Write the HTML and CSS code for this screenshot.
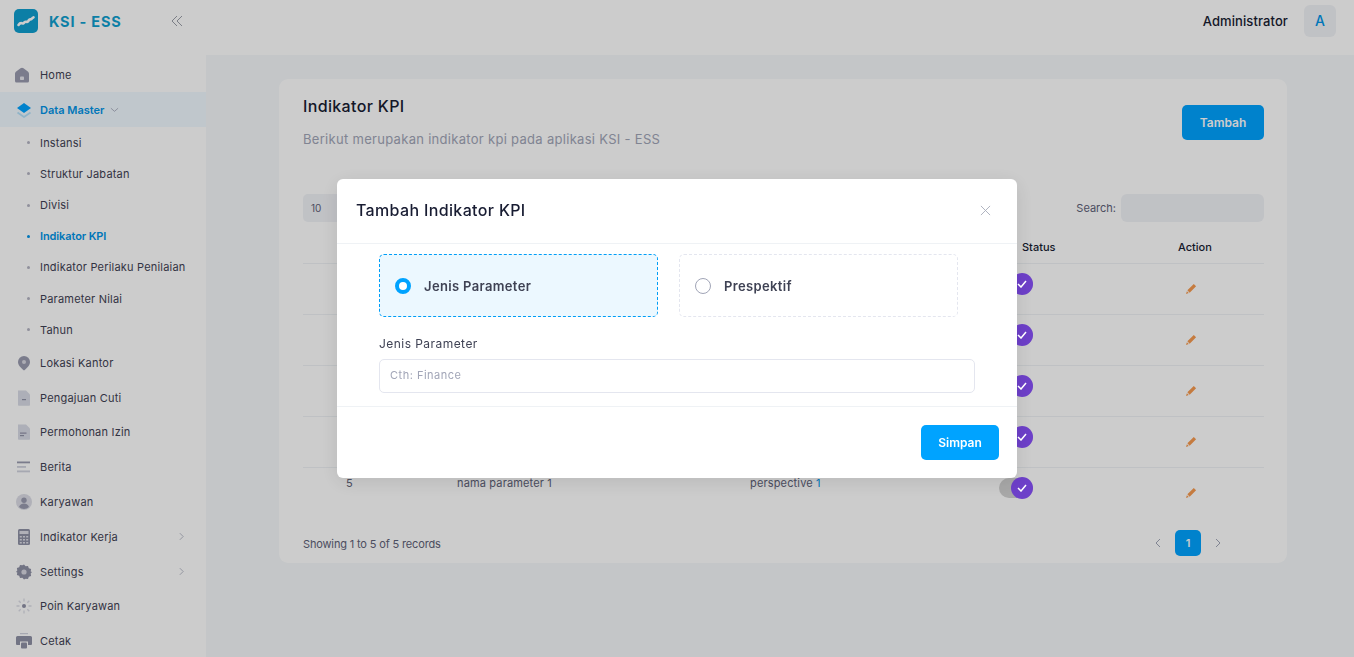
FILE: index.html
```html
<!DOCTYPE html>
<html lang="id">
<head>
<meta charset="utf-8">
<title>Indikator KPI</title>
<link rel="stylesheet" href="styles.css">
</head>
<body>
<div class="app">
  <aside class="sidebar">
    <div class="brand">
      <svg class="logo" viewBox="0 0 24 24"><rect width="24" height="24" rx="5" fill="#0f9fd0"/><path d="M4.500 16c1.500-2.200 3-2 4-1.500s2-2 3.500-1.700 2-.2 2.800-1.500 1.700-.6 2.500-1.200 1.200-1.300 2.200-1.800" fill="none" stroke="#fff" stroke-width="2.600" stroke-linecap="round" stroke-dasharray="4.500 1"/></svg>
      <span class="brand-name">KSI - ESS</span>
      <svg class="collapse" viewBox="0 0 14 14"><path d="M7 2 2 7l5 5M12 2 7 7l5 5" fill="none" stroke="#9a9ea8" stroke-width="1"/></svg>
    </div>
    <nav class="menu">
      <a class="item"><svg class="ic home" viewBox="0 0 16 16"><path d="M1 7c0-1 .3-1.800 1.200-2.500L6.500 1.300a2.500 2.500 0 0 1 3 0l4.300 3.200C14.700 5.200 15 6 15 7v7a1.500 1.500 0 0 1-1.500 1.500h-11A1.500 1.500 0 0 1 1 14z" fill="#9a9cb0"/><rect x="6" y="9.500" width="4" height="3.500" rx=".8" fill="#e8e8ee"/></svg><span>Home</span></a>
      <a class="item active"><svg class="ic" viewBox="0 0 16 16"><path d="M8 1l7 5-7 5-7-5z" fill="#00a3ff"/><path d="M1.500 10.500 8 15l6.500-4.500" fill="none" stroke="#b5e2fb" stroke-width="1.800"/></svg><span>Data Master</span><svg class="chev-down" viewBox="0 0 10 6"><path d="M1 1l4 3.500L9 1" fill="none" stroke="#a1a5b7" stroke-width=".9"/></svg></a>
      <a class="sub"><i class="dot"></i><span>Instansi</span></a>
      <a class="sub"><i class="dot"></i><span>Struktur Jabatan</span></a>
      <a class="sub"><i class="dot"></i><span>Divisi</span></a>
      <a class="sub current"><i class="dot"></i><span>Indikator KPI</span></a>
      <a class="sub"><i class="dot"></i><span>Indikator Perilaku Penilaian</span></a>
      <a class="sub"><i class="dot"></i><span>Parameter Nilai</span></a>
      <a class="sub"><i class="dot"></i><span>Tahun</span></a>
      <a class="item"><svg class="ic" viewBox="0 0 16 16"><path d="M8 1a6 6 0 0 1 6 6c0 3.500-3.500 6.500-6 8.500C5.500 13.500 2 10.500 2 7a6 6 0 0 1 6-6z" fill="#9a9cb0"/><circle cx="8" cy="7" r="2" fill="#d8d8e2"/></svg><span>Lokasi Kantor</span></a>
      <a class="item"><svg class="ic" viewBox="0 0 16 16"><path d="M2 .500h8l4 4V15a.8.8 0 0 1-.8.8H2.800A.8.8 0 0 1 2 15z" fill="#d9dbe6"/><rect x="6" y="9" width="4" height="1.200" fill="#8f91a6"/></svg><span>Pengajuan Cuti</span></a>
      <a class="item"><svg class="ic" viewBox="0 0 16 16"><path d="M2 .500h8l4 4V15a.8.8 0 0 1-.8.8H2.800A.8.8 0 0 1 2 15z" fill="#d9dbe6"/><rect x="4" y="8.500" width="6.500" height="1.200" fill="#8f91a6"/><rect x="4" y="11" width="4" height="1.200" fill="#8f91a6"/></svg><span>Permohonan Izin</span></a>
      <a class="item"><svg class="ic" viewBox="0 0 16 16"><rect x="1" y="2.500" width="13" height="1.800" fill="#9a9cb0"/><rect x="1" y="7" width="9" height="1.800" fill="#d0d2de"/><rect x="1" y="11.500" width="13" height="1.800" fill="#d0d2de"/></svg><span>Berita</span></a>
      <a class="item"><svg class="ic" viewBox="0 0 16 16"><circle cx="8" cy="8" r="8" fill="#dcdde6"/><circle cx="8" cy="6.300" r="2.700" fill="#9a9cb0"/><path d="M3 13c1-3 3-3.600 5-3.600S12 10 13 13a7 7 0 0 1-10 0z" fill="#9a9cb0"/></svg><span>Karyawan</span></a>
      <a class="item arrow"><svg class="ic" viewBox="0 0 16 16"><rect x="2" y="0" width="12" height="16" rx="1.500" fill="#8f91a6"/><rect x="3.500" y="2" width="9" height="3" fill="#dcdde6"/><path d="M3.800 7h2v1.600h-2zM7 7h2v1.600H7zM10.200 7h2v1.600h-2zM3.800 10h2v1.600h-2zM7 10h2v1.600H7zM10.200 10h2v1.600h-2zM3.800 13h2v1.600h-2zM7 13h2v1.600H7zM10.200 13h2v1.600h-2z" fill="#dcdde6"/></svg><span>Indikator Kerja</span><svg class="chev" viewBox="0 0 6 10"><path d="M1 1l4 4-4 4" fill="none" stroke="#a1a5b7" stroke-width=".9"/></svg></a>
      <a class="item arrow"><svg class="ic" viewBox="0 0 16 16"><path d="M8 .5l1.600 1.800 2.400-.4.8 2.300 2.300.8-.4 2.400L16 8l-1.300 1.600.4 2.400-2.300.8-.8 2.300-2.400-.4L8 15.500l-1.600-1.800-2.400.4-.8-2.300-2.300-.8.400-2.400L0 8l1.300-1.600-.4-2.400 2.300-.8.8-2.300 2.400.4z" fill="#8f91a6"/><circle cx="8" cy="8" r="2.600" fill="#d8d8e2"/></svg><span>Settings</span><svg class="chev" viewBox="0 0 6 10"><path d="M1 1l4 4-4 4" fill="none" stroke="#a1a5b7" stroke-width=".9"/></svg></a>
      <a class="item"><svg class="ic" viewBox="0 0 16 16"><circle cx="8" cy="8" r="2" fill="#8f91a6"/><path d="M8 .5v3M8 12.500v3M.5 8h3M12.500 8h3M2.700 2.700l2 2M11.300 11.300l2 2M2.700 13.300l2-2M11.300 4.700l2-2" stroke="#dcdde6" stroke-width="1.300" fill="none"/></svg><span>Poin Karyawan</span></a>
      <a class="item"><svg class="ic" viewBox="0 0 16 16"><rect x="4" y="0" width="8" height="1.200" fill="#d0d2de"/><path d="M1.500 3h13A1.500 1.500 0 0 1 16 4.500V11a1 1 0 0 1-1 1h-3V8.500H4V12H1a1 1 0 0 1-1-1V4.500A1.500 1.500 0 0 1 1.500 3z" fill="#8f91a6"/><rect x="5" y="9.500" width="6" height="6" rx="1" fill="#8f91a6"/></svg><span>Cetak</span></a>
    </nav>
  </aside>
  <div class="main">
    <header class="topbar">
      <span class="user">Administrator</span>
      <span class="avatar">A</span>
    </header>
    <main class="content">
      <section class="card">
        <div class="card-head">
          <div>
            <h1 class="card-title">Indikator KPI</h1>
            <p class="card-desc">Berikut merupakan indikator kpi pada aplikasi KSI - ESS</p>
          </div>
          <button class="btn-add">Tambah</button>
        </div>
        <div class="tools">
          <span class="length">10</span>
          <label class="search">Search:<span class="search-box"></span></label>
        </div>
        <table class="table">
          <thead>
            <tr><th class="c-no"></th><th class="c-name"></th><th class="c-persp"></th><th class="c-status">Status</th><th class="c-action">Action</th></tr>
          </thead>
          <tbody>
            <tr><td class="c-no"></td><td></td><td></td><td><span class="toggle"><svg viewBox="0 0 10 8"><path d="M1 4l3 3 5-6" fill="none" stroke="#fff" stroke-width="1.500"/></svg></span></td><td><svg class="pencil" viewBox="0 0 12 12"><path d="M8.500 1l2.500 2.500L4 10.500 1.500 8zM1 9l2 2-3 1z" fill="#f79a4f"/></svg></td></tr>
            <tr><td class="c-no"></td><td></td><td></td><td><span class="toggle"><svg viewBox="0 0 10 8"><path d="M1 4l3 3 5-6" fill="none" stroke="#fff" stroke-width="1.500"/></svg></span></td><td><svg class="pencil" viewBox="0 0 12 12"><path d="M8.500 1l2.500 2.500L4 10.500 1.500 8zM1 9l2 2-3 1z" fill="#f79a4f"/></svg></td></tr>
            <tr><td class="c-no"></td><td></td><td></td><td><span class="toggle"><svg viewBox="0 0 10 8"><path d="M1 4l3 3 5-6" fill="none" stroke="#fff" stroke-width="1.500"/></svg></span></td><td><svg class="pencil" viewBox="0 0 12 12"><path d="M8.500 1l2.500 2.500L4 10.500 1.500 8zM1 9l2 2-3 1z" fill="#f79a4f"/></svg></td></tr>
            <tr><td class="c-no"></td><td></td><td></td><td><span class="toggle"><svg viewBox="0 0 10 8"><path d="M1 4l3 3 5-6" fill="none" stroke="#fff" stroke-width="1.500"/></svg></span></td><td><svg class="pencil" viewBox="0 0 12 12"><path d="M8.500 1l2.500 2.500L4 10.500 1.500 8zM1 9l2 2-3 1z" fill="#f79a4f"/></svg></td></tr>
            <tr><td class="c-no">5</td><td>nama parameter 1</td><td>perspective <b class="blue">1</b></td><td><span class="toggle"><svg viewBox="0 0 10 8"><path d="M1 4l3 3 5-6" fill="none" stroke="#fff" stroke-width="1.500"/></svg></span></td><td><svg class="pencil" viewBox="0 0 12 12"><path d="M8.500 1l2.500 2.500L4 10.500 1.500 8zM1 9l2 2-3 1z" fill="#f79a4f"/></svg></td></tr>
          </tbody>
        </table>
        <div class="card-foot">
          <span class="records">Showing 1 to 5 of 5 records</span>
          <div class="pager">
            <svg class="pg" viewBox="0 0 6 10"><path d="M5 1 1 5l4 4" fill="none" stroke="#a1a5b7" stroke-width="1"/></svg>
            <span class="pg-num">1</span>
            <svg class="pg" viewBox="0 0 6 10"><path d="M1 1l4 4-4 4" fill="none" stroke="#a1a5b7" stroke-width="1"/></svg>
          </div>
        </div>
      </section>
    </main>
  </div>
</div>
<div class="overlay">
  <div class="modal">
    <div class="modal-head">
      <h2 class="modal-title">Tambah Indikator KPI</h2>
      <svg class="close" viewBox="0 0 12 12"><path d="M1 1l10 10M11 1 1 11" fill="none" stroke="#a9adbb" stroke-width="1"/></svg>
    </div>
    <div class="modal-body">
      <div class="options">
        <div class="option on"><span class="radio"></span><span>Jenis Parameter</span></div>
        <div class="option"><span class="radio"></span><span>Prespektif</span></div>
      </div>
      <label class="field-label">Jenis Parameter</label>
      <div class="input">Cth: Finance</div>
    </div>
    <div class="modal-foot"><button class="btn-save">Simpan</button></div>
  </div>
</div>
</body>
</html>
```

FILE: styles.css
```css
* { box-sizing: border-box; }
html, body { margin: 0; height: 100%; overflow: hidden; }
body { font-family: Inter, "Noto Sans", sans-serif; font-size: 11px; color: #3f4254; background: #f5f8fa; }
svg { display: block; flex: none; }
.app { display: flex; height: 657px; }
.sidebar { width: 206px; flex: none; background: #fff; overflow: hidden; }
.brand { height: 55px; display: flex; align-items: center; padding: 0 22px 13px 14px; }
.logo { width: 24px; height: 24px; }
.brand-name { margin-left: 11px; font-size: 14.500px; font-weight: 700; letter-spacing: .8px; color: #0f9fd0; flex: 1; }
.collapse { width: 14px; height: 14px; }
.menu { display: flex; flex-direction: column; padding-top: 2.500px; }
.item { height: 34.800px; flex: none; display: flex; align-items: center; padding-left: 16px; color: #3f4254; font-weight: 400; letter-spacing: .2px; }
.item > span { margin-left: 8px; }
.ic { width: 16px; height: 16px; }
.ic.home { margin-left: -2px; margin-right: 2px; }
.active { background: #f1f9ff; color: #0094e8; font-weight: 600; letter-spacing: 0; }
.chev-down { width: 9px; height: 6px; margin-left: 6px; }
.chev { width: 5px; height: 9px; margin-left: auto; margin-right: 22px; }
.sub { height: 31.200px; flex: none; display: flex; align-items: center; padding-left: 27px; color: #3f4254; font-weight: 400; letter-spacing: .2px; }
.sub > span { margin-left: 10px; }
.dot { width: 3px; height: 3px; border-radius: 50%; background: #b5b5c3; }
.current { color: #0094e8; font-weight: 600; letter-spacing: -.1px; }
.current .dot { background: #0094e8; }
.main { flex: 1; min-width: 0; display: flex; flex-direction: column; }
.topbar { height: 55px; flex: none; background: #fff; display: flex; justify-content: flex-end; align-items: center; padding: 0 18px 14px 0; }
.user { font-size: 13px; font-weight: 500; color: #181c32; margin-right: 16px; letter-spacing: .1px; }
.avatar { width: 32px; height: 32px; border-radius: 6px; background: #f1f3f7; color: #0094e8; display: flex; align-items: center; justify-content: center; font-size: 14px; font-weight: 500; }
.content { flex: 1; padding: 24px 67px 0 73px; }
.card { background: #fff; border-radius: 9px; height: 484px; padding: 16px 23px 0 24px; }
.card-head { display: flex; justify-content: space-between; align-items: flex-start; height: 99px; }
.card-title { margin: 0; font-size: 16px; font-weight: 500; color: #181c32; line-height: 23px; letter-spacing: .35px; }
.card-desc { margin: 11px 0 0; font-size: 13px; color: #a1a5b7; font-weight: 400; line-height: 20px; letter-spacing: .3px; }
.btn-add { margin-top: 10px; width: 82px; height: 35px; border: 0; border-radius: 5px; background: #00a3ff; color: #fff; font: 600 12px Inter, sans-serif; }
.tools { height: 28px; display: flex; justify-content: space-between; align-items: center; }
.length { width: 60px; height: 28px; background: #f1f3f7; border-radius: 5px; padding-left: 8px; font-size: 10px; display: flex; align-items: center; color: #5e6278; }
.search { display: flex; align-items: center; color: #5e6278; font-size: 11px; font-weight: 400; line-height: 26px; }
.search-box { width: 143px; height: 28px; margin-left: 5px; background: #f1f3f7; border-radius: 6px; }
.table { width: 961px; margin-top: 10px; border-collapse: collapse; table-layout: fixed; }
.table th { height: 31px; text-align: left; font-weight: 500; font-size: 11px; color: #181c32; border-bottom: 1px solid #eff2f5; padding: 0; }
.table td { height: 51px; padding: 7px 0 0; vertical-align: top; line-height: 16px; font-size: 11px; color: #5e6278; border-bottom: 1px solid #eff2f5; font-weight: 400; letter-spacing: .15px; }
.table tbody tr:last-child td { border-bottom: 0; }
.c-no { width: 154px; padding-left: 43px !important; }
.c-name { width: 293px; }
.c-persp { width: 249px; }
.c-status { width: 172px; padding-left: 23px !important; }
.c-action { padding-left: 7px !important; }
.blue { color: #0094e8; font-weight: 400; }
.toggle { display: block; position: relative; width: 34px; height: 20px; margin-top: 3px; background: #d2d2d2; border-radius: 10px; }
.toggle::after { content: ""; position: absolute; right: 0; top: -1px; width: 22px; height: 22px; border-radius: 50%; background: #8950fc; }
.toggle svg { position: absolute; right: 6px; top: 6px; width: 10px; height: 8px; z-index: 1; }
.pencil { width: 11px; height: 11px; margin: 12px 0 0 15px; }
.card-foot { display: flex; justify-content: space-between; align-items: center; margin-top: 12px; padding-right: 43px; }
.records { font-size: 11px; font-weight: 400; color: #5e6278; letter-spacing: -.15px; padding-top: 1px; }
.pager { display: flex; align-items: center; gap: 14px; }
.pg { width: 6px; height: 10px; }
.pg-num { width: 26px; height: 26px; background: #00a3ff; color: #fff; border-radius: 5px; display: flex; align-items: center; justify-content: center; font-weight: 600; font-size: 11px; }
.overlay { position: fixed; inset: 0; background: rgba(0,0,0,.2); display: flex; justify-content: center; padding-top: 179px; }
.modal { width: 680px; height: 299px; background: #fff; border-radius: 6px; box-shadow: 0 4px 20px rgba(0,0,0,.1); display: flex; flex-direction: column; }
.modal-head { height: 65px; flex: none; display: flex; justify-content: space-between; align-items: center; padding: 0 26px 2px 19px; border-bottom: 1px solid #eff2f5; }
.modal-title { margin: 0; font-size: 16px; font-weight: 500; color: #181c32; letter-spacing: .35px; }
.close { width: 11px; height: 11px; }
.modal-body { height: 163px; flex: none; padding: 10px 42px 0; border-bottom: 1px solid #eff2f5; }
.options { display: flex; gap: 21px; }
.option { width: 279px; height: 63px; border: 1px dashed #e4e6ef; border-radius: 5px; display: flex; align-items: center; padding-left: 15px; gap: 13px; font-size: 13px; font-weight: 600; color: #3f4254; letter-spacing: .35px; }
.option.on { background: #ecf8ff; border-color: #009ef7; }
.radio { width: 16px; height: 16px; border-radius: 50%; background: #fff; border: 1px solid #a1a5b7; }
.on .radio { border: 4.500px solid #00a3ff; }
.field-label { display: block; margin-top: 18px; font-size: 12px; font-weight: 400; color: #3f4254; line-height: 17px; letter-spacing: .45px; }
.input { margin-top: 7px; height: 34px; width: 596px; border: 1px solid #e4e6ef; border-radius: 5px; display: flex; align-items: center; padding: 0 0 2px 10px; color: #a1a5b7; font-size: 11px; font-weight: 400; letter-spacing: .5px; }
.modal-foot { flex: 1; display: flex; justify-content: flex-end; align-items: flex-start; padding: 18px 18px 0 0; }
.btn-save { width: 78px; height: 35px; border: 0; border-radius: 5px; background: #00a3ff; color: #fff; font: 600 12px Inter, sans-serif; }
```
